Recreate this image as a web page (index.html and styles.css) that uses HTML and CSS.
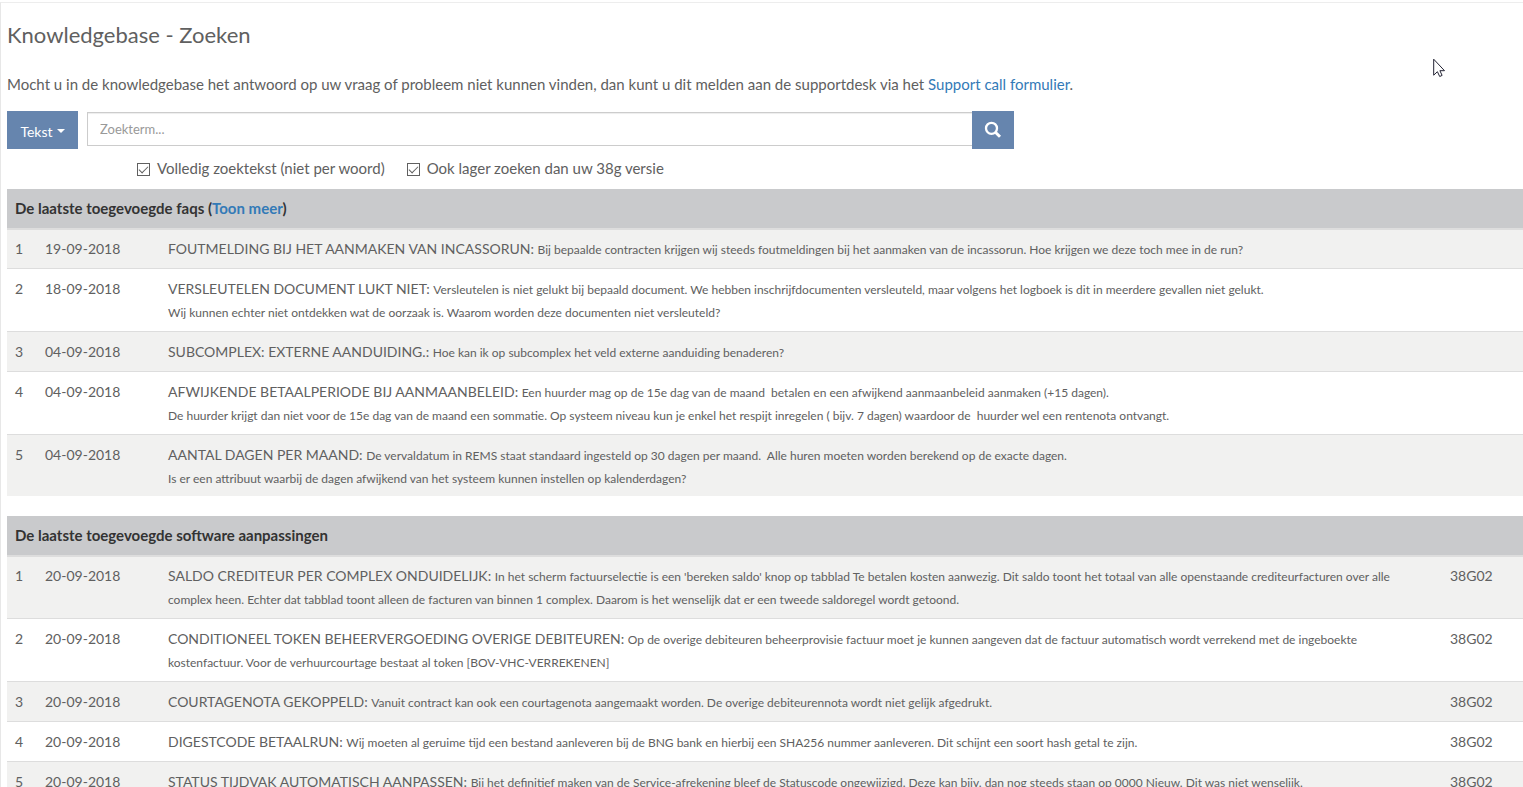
FILE: index.html
```html
<!DOCTYPE html>
<html lang="nl">
<head>
<meta charset="utf-8">
<title>Knowledgebase - Zoeken</title>
<link rel="stylesheet" href="styles.css">
</head>
<body>
<main class="page">
  <h1 class="title">Knowledgebase - Zoeken</h1>
  <p class="intro">Mocht u in de knowledgebase het antwoord op uw vraag of probleem niet kunnen vinden, dan kunt u dit melden aan de supportdesk via het <a href="#">Support call formulier</a>.</p>
  <form class="search">
    <div class="search-bar">
      <button class="btn btn-type" type="button">Tekst <span class="caret"></span></button>
      <div class="search-group">
        <input class="search-input" type="text" placeholder="Zoekterm..." aria-label="Zoekterm">
        <button class="btn btn-search" type="submit" aria-label="Zoeken">
          <svg width="18" height="18" viewBox="0 0 18 18" fill="none" stroke="#fff"><circle cx="7.5" cy="7.3" r="5.5" stroke-width="2.3"/><path d="M11.4 11.2 16 15.7" stroke-width="3"/></svg>
        </button>
      </div>
    </div>
    <div class="options">
      <label class="option"><input class="check" type="checkbox" checked>Volledig zoektekst (niet per woord)</label>
      <label class="option"><input class="check" type="checkbox" checked>Ook lager zoeken dan uw 38g versie</label>
    </div>
  </form>

  <table class="list">
    <colgroup><col class="col-nr"><col class="col-date"><col></colgroup>
    <thead><tr><th colspan="3">De laatste toegevoegde faqs (<a href="#">Toon meer</a>)</th></tr></thead>
    <tbody>
      <tr><td>1</td><td>19-09-2018</td><td>FOUTMELDING BIJ HET AANMAKEN VAN INCASSORUN: <small>Bij bepaalde contracten krijgen wij steeds foutmeldingen bij het aanmaken van de incassorun. Hoe krijgen we deze toch mee in de run?</small></td></tr>
      <tr><td>2</td><td>18-09-2018</td><td>VERSLEUTELEN DOCUMENT LUKT NIET: <small>Versleutelen is niet gelukt bij bepaald document. We hebben inschrijfdocumenten versleuteld, maar volgens het logboek is dit in meerdere gevallen niet gelukt.<br>Wij kunnen echter niet ontdekken wat de oorzaak is. Waarom worden deze documenten niet versleuteld?</small></td></tr>
      <tr><td>3</td><td>04-09-2018</td><td>SUBCOMPLEX: EXTERNE AANDUIDING.: <small>Hoe kan ik op subcomplex het veld externe aanduiding benaderen?</small></td></tr>
      <tr><td>4</td><td>04-09-2018</td><td>AFWIJKENDE BETAALPERIODE BIJ AANMAANBELEID: <small>Een huurder mag op de 15e dag van de maand&nbsp; betalen en een afwijkend aanmaanbeleid aanmaken (+15 dagen).<br>De huurder krijgt dan niet voor de 15e dag van de maand een sommatie. Op systeem niveau kun je enkel het respijt inregelen ( bijv. 7 dagen) waardoor de&nbsp; huurder wel een rentenota ontvangt.</small></td></tr>
      <tr><td>5</td><td>04-09-2018</td><td>AANTAL DAGEN PER MAAND: <small>De vervaldatum in REMS staat standaard ingesteld op 30 dagen per maand.&nbsp; Alle huren moeten worden berekend op de exacte dagen.<br>Is er een attribuut waarbij de dagen afwijkend van het systeem kunnen instellen op kalenderdagen?</small></td></tr>
    </tbody>
  </table>

  <table class="list">
    <colgroup><col class="col-nr"><col class="col-date"><col><col class="col-version"></colgroup>
    <thead><tr><th colspan="4">De laatste toegevoegde software aanpassingen</th></tr></thead>
    <tbody>
      <tr><td>1</td><td>20-09-2018</td><td>SALDO CREDITEUR PER COMPLEX ONDUIDELIJK: <small>In het scherm factuurselectie is een 'bereken saldo' knop op tabblad Te betalen kosten aanwezig. Dit saldo toont het totaal van alle openstaande crediteurfacturen over alle<br>complex heen. Echter dat tabblad toont alleen de facturen van binnen 1 complex. Daarom is het wenselijk dat er een tweede saldoregel wordt getoond.</small></td><td>38G02</td></tr>
      <tr><td>2</td><td>20-09-2018</td><td>CONDITIONEEL TOKEN BEHEERVERGOEDING OVERIGE DEBITEUREN: <small>Op de overige debiteuren beheerprovisie factuur moet je kunnen aangeven dat de factuur automatisch wordt verrekend met de ingeboekte<br>kostenfactuur. Voor de verhuurcourtage bestaat al token [BOV-VHC-VERREKENEN]</small></td><td>38G02</td></tr>
      <tr><td>3</td><td>20-09-2018</td><td>COURTAGENOTA GEKOPPELD: <small>Vanuit contract kan ook een courtagenota aangemaakt worden. De overige debiteurennota wordt niet gelijk afgedrukt.</small></td><td>38G02</td></tr>
      <tr><td>4</td><td>20-09-2018</td><td>DIGESTCODE BETAALRUN: <small>Wij moeten al geruime tijd een bestand aanleveren bij de BNG bank en hierbij een SHA256 nummer aanleveren. Dit schijnt een soort hash getal te zijn.</small></td><td>38G02</td></tr>
      <tr><td>5</td><td>20-09-2018</td><td>STATUS TIJDVAK AUTOMATISCH AANPASSEN: <small>Bij het definitief maken van de Service-afrekening bleef de Statuscode ongewijzigd. Deze kan bijv. dan nog steeds staan op 0000 Nieuw. Dit was niet wenselijk.</small></td><td>38G02</td></tr>
    </tbody>
  </table>
</main>
<svg class="cursor" width="12" height="20" viewBox="0 0 12 20"><path d="M.7 1.2v16l3.7-3.5 2.3 4.8 2.4-1.1-2.2-4.7h4.6z" fill="#fff" stroke="#223" stroke-width="1"/></svg>
</body>
</html>
```
FILE: styles.css
```css
* { box-sizing: border-box; }
html { height: 100%; overflow: hidden; }
body {
  margin: 2px 0 0;
  height: 100%;
  overflow: hidden;
  background: #fff;
  color: #606060;
  font-family: Lato, "Open Sans", sans-serif;
  font-size: 15px;
  line-height: 23px;
}
a { color: #337ab7; text-decoration: none; }
.page {
  padding: 20px 0 0 6px;
  border-left: 1px solid #e7e7e7;
  border-top: 1px solid #ededed;
}
.title { margin: 0 0 26px; font-size: 22px; font-weight: 400; line-height: 24px; }
.intro { margin: 0 0 15px; }
.search-bar { display: flex; align-items: flex-start; gap: 9px; width: 66.4%; }
.btn {
  display: flex;
  align-items: center;
  justify-content: center;
  height: 38px;
  border: 0;
  background: #6685ae;
  color: #fff;
  font: inherit;
}
.btn-type { flex: none; gap: 4px; width: 71px; padding: 2px 0 0; font-size: 14px; }
.caret { border: 4px solid transparent; border-top-color: #fff; border-bottom: 0; }
.search-group { display: flex; flex: 1; }
.search-input {
  flex: 1;
  min-width: 0;
  height: 34px;
  margin-top: 1px;
  padding: 0 12px;
  border: 1px solid #ccc;
  border-right: 0;
  box-shadow: inset 0 1px 1px rgba(0, 0, 0, .075);
  color: #555;
  font: inherit;
  font-size: 13px;
}
.search-input::placeholder { color: #999; opacity: 1; }
.btn-search { width: 42px; padding: 0; }
.options { display: flex; gap: 22px; padding: 8px 0 9px 130px; }
.option { display: flex; align-items: center; gap: 7px; }
.check {
  appearance: none;
  width: 13px;
  height: 13px;
  margin: 2px 0 0;
  border: 1px solid #606060;
  background: #fff;
  display: grid;
  place-items: center;
}
.check:checked::before {
  content: "";
  width: 8px;
  height: 4px;
  margin-bottom: 3px;
  border: solid #606060;
  border-width: 0 0 1px 1px;
  transform: rotate(-45deg);
}
.list {
  width: 100%;
  margin-bottom: 20px;
  table-layout: fixed;
  border-spacing: 0;
}
.col-nr { width: 30px; }
.col-date { width: 123px; }
.col-version { width: 81px; }
.list th {
  padding: 8px;
  background: #c9cacc;
  border-bottom: 2px solid #ddd;
  color: #333;
  font-weight: 700;
  text-align: left;
}
.list td { padding: 8px; border-bottom: 1px solid #ddd; font-size: 14px; vertical-align: top; }
.list tbody tr:first-child td { padding-top: 7px; }
.list tbody tr:last-child td { padding-bottom: 7px; border-bottom: 0; }
.list tbody tr:nth-child(odd) { background: #f1f1f0; }
.list small { font-size: 12px; line-height: 1; }
.cursor { position: absolute; left: 1433px; top: 58px; }
```
